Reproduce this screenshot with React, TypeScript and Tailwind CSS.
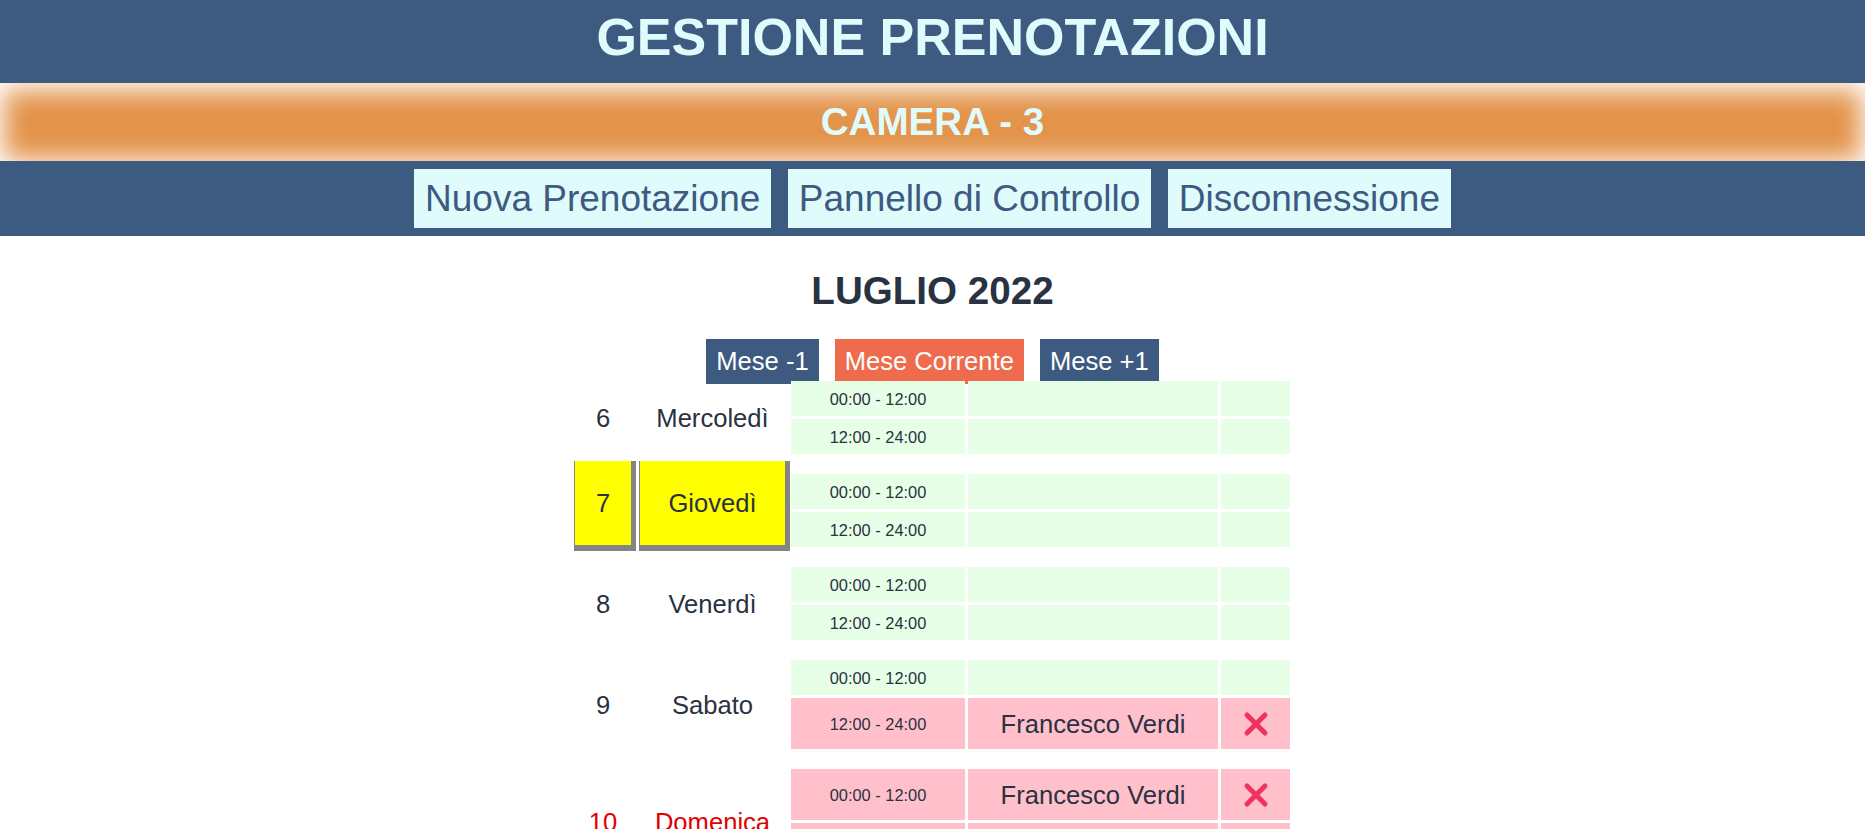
import React from "react";

type Slot = { time: string; guest?: string };
type Day = { n: number; name: string; today?: boolean; holiday?: boolean; slots: Slot[] };

const days: Day[] = [
  { n: 6, name: "Mercoledì", slots: [{ time: "00:00 - 12:00" }, { time: "12:00 - 24:00" }] },
  { n: 7, name: "Giovedì", today: true, slots: [{ time: "00:00 - 12:00" }, { time: "12:00 - 24:00" }] },
  { n: 8, name: "Venerdì", slots: [{ time: "00:00 - 12:00" }, { time: "12:00 - 24:00" }] },
  {
    n: 9,
    name: "Sabato",
    slots: [{ time: "00:00 - 12:00" }, { time: "12:00 - 24:00", guest: "Francesco Verdi" }],
  },
  {
    n: 10,
    name: "Domenica",
    holiday: true,
    slots: [
      { time: "00:00 - 12:00", guest: "Francesco Verdi" },
      { time: "12:00 - 24:00", guest: "Francesco Verdi" },
    ],
  },
];

function XIcon() {
  return (
    <svg width="26" height="26" viewBox="0 0 26 26" aria-hidden>
      <path d="M4 4 L22 22 M22 4 L4 22" stroke="#f0325e" strokeWidth="5" strokeLinecap="round" fill="none" />
    </svg>
  );
}

function SlotRow({ slot }: { slot: Slot }) {
  const booked = !!slot.guest;
  const bg = booked ? "bg-[#ffc0cb]" : "bg-[#e6ffe6]";
  const h = booked ? "h-[51px]" : "h-[35px]";
  return (
    <div className={`flex gap-[3px] ${h}`}>
      <div className={`w-[174px] ${bg} flex items-center justify-center text-[16.4px] text-[#293241]`}>
        {slot.time}
      </div>
      <div className={`w-[250px] ${bg} flex items-center justify-center text-[25.6px] text-[#293241]`}>
        {slot.guest ?? ""}
      </div>
      <div className={`w-[69px] ${bg} flex items-center justify-center`}>{booked ? <XIcon /> : null}</div>
    </div>
  );
}

function DayGroup({ day }: { day: Day }) {
  const color = day.holiday ? "text-[#e00000]" : "text-[#293241]";
  return (
    <div className="flex items-center">
      {day.today ? (
        <>
          <div className="w-[56px] h-[84px] -mt-[13px] mb-[2px] bg-[#ffff00] shadow-[2px_3px_0_3px_#848484] flex items-center justify-center text-[25.6px] text-[#293241]">
            {day.n}
          </div>
          <div className="w-[145px] ml-[9px] h-[84px] -mt-[13px] mb-[2px] bg-[#ffff00] shadow-[2px_3px_0_3px_#848484] flex items-center justify-center text-[25.6px] text-[#293241]">
            {day.name}
          </div>
        </>
      ) : (
        <>
          <div className={`w-[56px] flex justify-center text-[25.6px] ${color}`}>{day.n}</div>
          <div className={`w-[145px] ml-[9px] flex justify-center text-[25.6px] ${color}`}>{day.name}</div>
        </>
      )}
      <div className="ml-[6px] flex flex-col gap-[3px]">
        {day.slots.map((s, i) => (
          <SlotRow key={i} slot={s} />
        ))}
      </div>
    </div>
  );
}

export default function App() {
  return (
    <div className="min-h-screen bg-white font-['Liberation_Sans',Arial,sans-serif]">
      <header className="h-[83px] bg-[#3d5a80] flex justify-center pt-[7px]">
        <h1 className="text-[52px] leading-[60px] font-bold text-[#e0fbfc]">GESTIONE PRENOTAZIONI</h1>
      </header>
      <div className="h-[78px] bg-[#e3934a] shadow-[inset_0_3px_26px_4px_#ffffff] flex items-center justify-center">
        <h2 className="text-[38.6px] leading-[44px] font-bold text-[#e0fbfc]">CAMERA - 3</h2>
      </div>
      <nav className="h-[75px] bg-[#3d5a80] flex items-center justify-center gap-[16.5px]">
        {["Nuova Prenotazione", "Pannello di Controllo", "Disconnessione"].map((t) => (
          <a
            key={t}
            className="h-[59px] px-[11px] bg-[#e0fbfc] text-[#3d5a80] text-[37px] leading-[59px] whitespace-nowrap"
          >
            {t}
          </a>
        ))}
      </nav>
      <div className="pt-[33px] flex justify-center">
        <h2 className="text-[38.6px] leading-[44.4px] font-bold text-[#293241]">LUGLIO 2022</h2>
      </div>
      <div className="mt-[25.6px] flex justify-center gap-[16px]">
        <a className="h-[45.4px] px-[10px] bg-[#3d5a80] text-white text-[25.6px] leading-[45.4px]">Mese -1</a>
        <a className="h-[45.4px] px-[10px] bg-[#ee6c4d] text-white text-[25.6px] leading-[45.4px]">
          Mese Corrente
        </a>
        <a className="h-[45.4px] px-[10px] bg-[#3d5a80] text-white text-[25.6px] leading-[45.4px]">Mese +1</a>
      </div>
      <div className="-mt-[3px] flex justify-center">
        <div className="flex flex-col gap-[20px]">
          {days.map((d) => (
            <DayGroup key={d.n} day={d} />
          ))}
        </div>
      </div>
    </div>
  );
}
